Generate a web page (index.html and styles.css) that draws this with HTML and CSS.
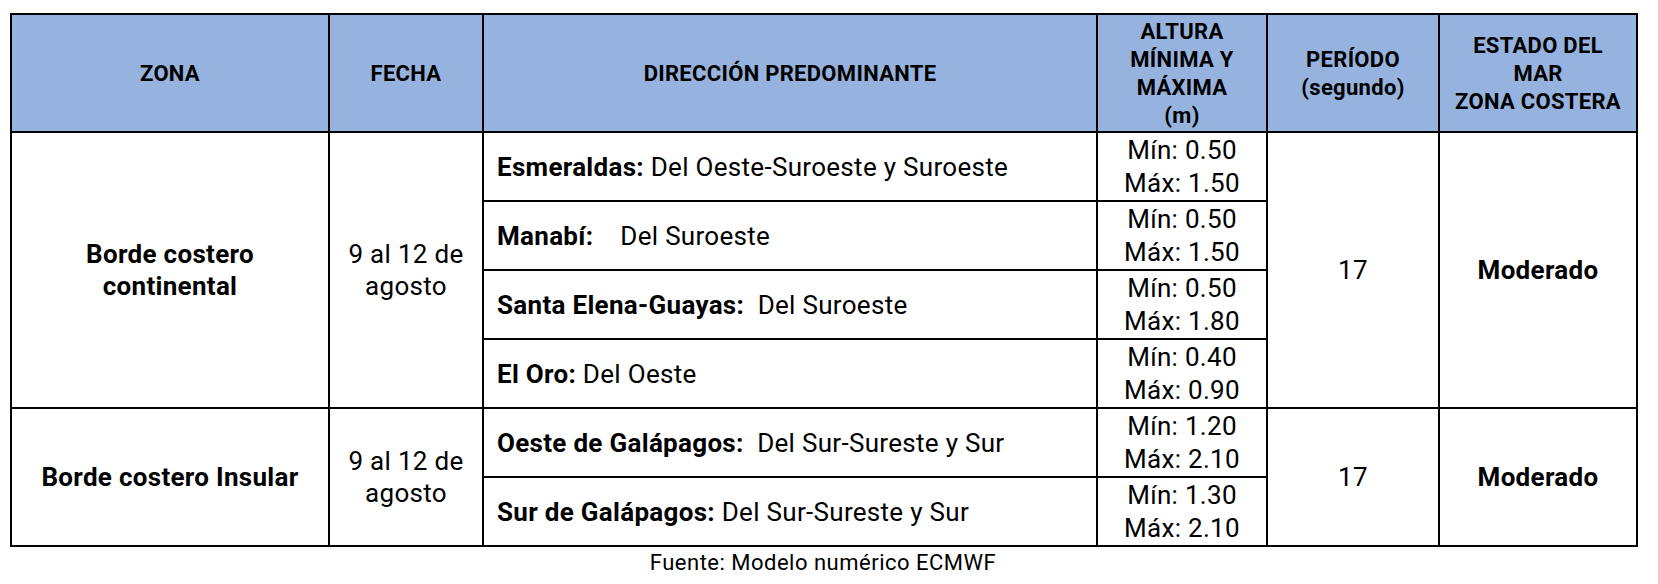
FILE: index.html
```html
<!DOCTYPE html>
<html lang="es">
<head>
<meta charset="utf-8">
<title>Oleaje</title>
<link rel="stylesheet" href="styles.css">
</head>
<body>
<div class="wrap">
<table class="tbl">
  <colgroup>
    <col class="c1"><col class="c2"><col class="c3"><col class="c4"><col class="c5"><col class="c6">
  </colgroup>
  <thead>
    <tr class="head">
      <th>ZONA</th>
      <th>FECHA</th>
      <th>DIRECCIÓN PREDOMINANTE</th>
      <th>ALTURA<br>MÍNIMA Y<br>MÁXIMA<br>(m)</th>
      <th>PERÍODO<br>(segundo)</th>
      <th>ESTADO DEL<br>MAR<br>ZONA COSTERA</th>
    </tr>
  </thead>
  <tbody>
    <tr>
      <td rowspan="4" class="zona">Borde costero<br>continental</td>
      <td rowspan="4" class="fecha">9 al 12 de<br>agosto</td>
      <td class="dir"><b>Esmeraldas:</b> Del Oeste-Suroeste y Suroeste</td>
      <td class="alt">Mín: 0.50<br>Máx: 1.50</td>
      <td rowspan="4" class="per">17</td>
      <td rowspan="4" class="est">Moderado</td>
    </tr>
    <tr>
      <td class="dir"><b>Manabí:</b>&nbsp;&nbsp;&nbsp; Del Suroeste</td>
      <td class="alt">Mín: 0.50<br>Máx: 1.50</td>
    </tr>
    <tr>
      <td class="dir"><b>Santa Elena-Guayas:</b>&nbsp; Del Suroeste</td>
      <td class="alt">Mín: 0.50<br>Máx: 1.80</td>
    </tr>
    <tr>
      <td class="dir"><b>El Oro:</b> Del Oeste</td>
      <td class="alt">Mín: 0.40<br>Máx: 0.90</td>
    </tr>
    <tr>
      <td rowspan="2" class="zona">Borde costero Insular</td>
      <td rowspan="2" class="fecha">9 al 12 de<br>agosto</td>
      <td class="dir"><b>Oeste de Galápagos:</b>&nbsp; Del Sur-Sureste y Sur</td>
      <td class="alt">Mín: 1.20<br>Máx: 2.10</td>
      <td rowspan="2" class="per">17</td>
      <td rowspan="2" class="est">Moderado</td>
    </tr>
    <tr>
      <td class="dir"><b>Sur de Galápagos:</b> Del Sur-Sureste y Sur</td>
      <td class="alt">Mín: 1.30<br>Máx: 2.10</td>
    </tr>
  </tbody>
</table>
<p class="fuente">Fuente: Modelo numérico ECMWF</p>
</div>
</body>
</html>
```

FILE: styles.css
```css
html, body {
  margin: 0;
  padding: 0;
  background: #ffffff;
}
body {
  font-family: Roboto, "Liberation Sans", sans-serif;
  color: #000000;
}
.wrap {
  width: 1626px;
  padding: 13px 0 0 10px;
}
.tbl {
  width: 1626px;
  border-collapse: collapse;
  table-layout: fixed;
}
.c1 { width: 318px; }
.c2 { width: 154px; }
.c3 { width: 614px; }
.c4 { width: 170px; }
.c5 { width: 172px; }
.c6 { width: 198px; }
.tbl th, .tbl td {
  border: 2px solid #000000;
  padding: 0;
  vertical-align: middle;
}
.head {
  height: 118px;
}
.head th {
  background: #95b3de;
  font-size: 22px;
  line-height: 28px;
  letter-spacing: 0.3px;
  font-weight: 700;
  text-align: center;
  padding-top: 2px;
}
.tbl tbody tr {
  height: 69px;
}
.tbl td {
  font-size: 26px;
  line-height: 32px;
  letter-spacing: 0.3px;
  text-align: center;
}
.zona, .est {
  font-weight: 700;
}
.dir {
  text-align: left !important;
  padding-left: 13px !important;
}
.dir b {
  font-weight: 700;
}
.alt {
  line-height: 33px !important;
}
.fuente {
  width: 1626px;
  margin: 3px 0 0 0;
  font-size: 22px;
  line-height: 26px;
  letter-spacing: 0.5px;
  text-align: center;
}
```
